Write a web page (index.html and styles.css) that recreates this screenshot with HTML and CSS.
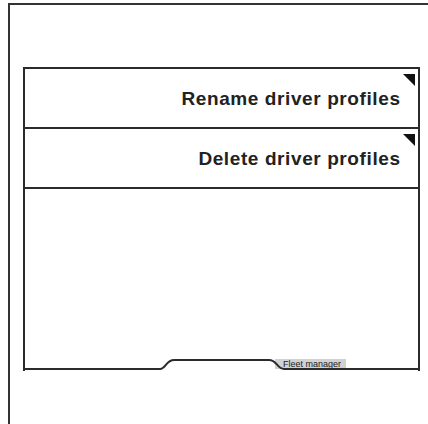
FILE: index.html
```html
<!DOCTYPE html>
<html>
<head>
<meta charset="utf-8">
<link rel="stylesheet" href="styles.css">
</head>
<body>
<div class="frame">
  <div class="panel">
    <div class="row">
      <span class="corner"></span>
      <span class="label">Rename driver profiles</span>
    </div>
    <div class="row">
      <span class="corner"></span>
      <span class="label">Delete driver profiles</span>
    </div>
    <div class="body"></div>
    <div class="tabbar">
      <span class="tag">Fleet manager</span>
      <svg class="edge" width="393" height="14" viewBox="0 0 393 14">
        <path d="M0 12 H135 C141 12 141 3 149 3 H244 C252 3 252 12 259 12 H393" fill="none" stroke="#2b2b2b" stroke-width="2"/>
      </svg>
    </div>
  </div>
</div>
</body>
</html>
```

FILE: styles.css
```css
html, body {
  margin: 0;
  padding: 0;
  background: #fff;
  overflow: hidden;
}
body {
  width: 428px;
  height: 424px;
}
.frame {
  margin: 3px 0 0 8px;
  height: 440px;
  border-top: 2px solid #333;
  border-left: 2px solid #333;
  padding: 62px 0 0 13px;
  box-sizing: border-box;
}
.panel {
  width: 397px;
  box-sizing: border-box;
  border-top: 2px solid #2b2b2b;
  border-left: 2px solid #2b2b2b;
  border-right: 2px solid #2b2b2b;
  display: flex;
  flex-direction: column;
}
.row {
  position: relative;
  height: 56px;
  border-bottom: 2px solid #2b2b2b;
  display: flex;
  align-items: center;
  justify-content: flex-end;
  padding: 2px 18px 0 0;
  box-sizing: content-box;
}
.label {
  font-family: "Liberation Sans", Arial, sans-serif;
  font-weight: 700;
  font-size: 19px;
  letter-spacing: 0.6px;
  margin-right: -0.6px;
  color: #222;
}
.corner {
  position: absolute;
  top: 5px;
  right: 3px;
  width: 0;
  height: 0;
  border-left: 12px solid transparent;
  border-top: 12px solid #111;
}
.body {
  height: 168px;
}
.tabbar {
  position: relative;
  height: 14px;
}
.edge {
  position: absolute;
  left: 0;
  top: 0;
  display: block;
}
.tag {
  position: absolute;
  left: 250px;
  top: 2px;
  height: 10px;
  background: #d2d2d2;
  font-family: "Liberation Sans", sans-serif;
  font-size: 9px;
  line-height: 10px;
  color: #222;
  padding: 0 5px 0 8px;
  white-space: nowrap;
}
```
